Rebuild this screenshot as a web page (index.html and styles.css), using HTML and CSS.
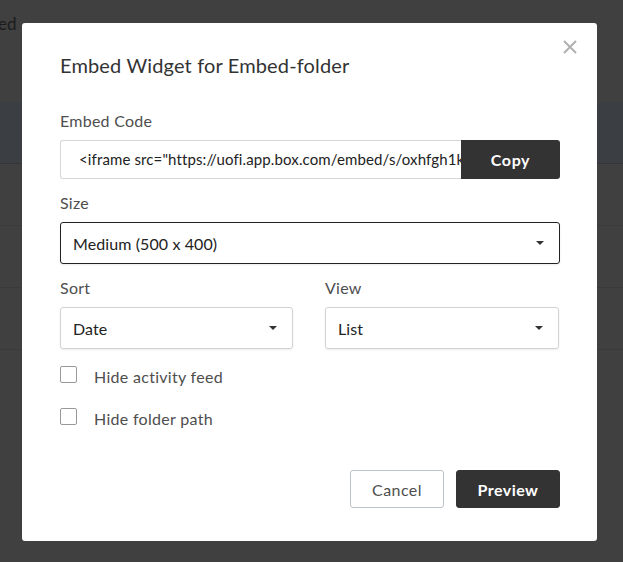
FILE: index.html
```html
<!DOCTYPE html>
<html>
<head>
<meta charset="utf-8">
<link rel="stylesheet" href="styles.css">
</head>
<body>
<div class="page">
  <div class="page-head"><span class="page-title">Embed</span></div>
  <div class="page-band"></div>
  <div class="page-row"></div>
  <div class="page-row"></div>
  <div class="page-row"></div>
</div>

<div class="modal">
  <button class="close" aria-label="Close">
    <svg width="14" height="14" viewBox="0 0 14 14"><path d="M1 1L13 13M13 1L1 13" stroke="#b0b0b0" stroke-width="2" fill="none"/></svg>
  </button>
  <h1 class="title">Embed Widget for Embed-folder</h1>

  <div class="field">
    <div class="label">Embed Code</div>
    <div class="code-row">
      <div class="code-input">&lt;iframe src="https://uofi.app.box.com/embed/s/oxhfgh1k2l3m4n5o6p7q"</div>
      <button class="btn-copy">Copy</button>
    </div>
  </div>

  <div class="field">
    <div class="label">Size</div>
    <div class="select focused"><span>Medium (500 x 400)</span><i class="caret"></i></div>
  </div>

  <div class="two-col">
    <div class="field">
      <div class="label">Sort</div>
      <div class="select"><span>Date</span><i class="caret"></i></div>
    </div>
    <div class="field">
      <div class="label">View</div>
      <div class="select"><span>List</span><i class="caret"></i></div>
    </div>
  </div>

  <label class="check"><span class="box"></span><span class="check-text">Hide activity feed</span></label>
  <label class="check"><span class="box"></span><span class="check-text">Hide folder path</span></label>

  <div class="footer">
    <button class="btn-cancel">Cancel</button>
    <button class="btn-primary">Preview</button>
  </div>
</div>
</body>
</html>
```

FILE: styles.css
```css
* { box-sizing: border-box; }
html, body { margin: 0; padding: 0; }
body {
  width: 623px;
  height: 562px;
  overflow: hidden;
  background: #404040;
  font-family: Lato, "Open Sans", sans-serif;
  position: relative;
}
.page { display: flex; flex-direction: column; }
.page-head { height: 102px; padding-top: 13px; overflow: hidden; }
.page-title {
  display: block;
  margin-left: -35px;
  font-size: 17px;
  line-height: 22px;
  color: #1c1c1c;
}
.page-band { height: 62px; background: #3b3f43; border-bottom: 1px solid #353535; }
.page-row { height: 62px; border-bottom: 1px solid #3a3a3a; }

.modal {
  position: absolute;
  left: 22px;
  top: 23px;
  width: 575px;
  height: 518px;
  background: #fff;
  border-radius: 3px;
  padding: 29px 37px 0 38px;
  color: #4e4e4e;
}
.close {
  position: absolute;
  right: 20px;
  top: 17px;
  border: 0;
  background: none;
  padding: 0;
  width: 14px;
  height: 14px;
  line-height: 0;
}
.title {
  margin: 0 0 34px;
  font-size: 20px;
  font-weight: 400;
  letter-spacing: 0.15px;
  color: #333;
  line-height: 26px;
}
.field { display: flex; flex-direction: column; margin-bottom: 15px; }
.label { font-size: 16px; letter-spacing: 0.25px; line-height: 18px; margin-bottom: 10px; color: #4e4e4e; }
.code-row { display: flex; height: 39px; }
.code-input {
  flex: 1;
  min-width: 0;
  border: 1px solid #d6d6d6;
  border-right: 0;
  border-radius: 3px 0 0 3px;
  padding: 0 0 0 18px;
  font-size: 15px;
  letter-spacing: 0.12px;
  line-height: 37px;
  color: #222;
  white-space: nowrap;
  overflow: hidden;
}
.btn-copy {
  width: 99px;
  border: 0;
  border-radius: 0 3px 3px 0;
  background: #333;
  color: #fff;
  font-family: inherit;
  font-size: 16px;
  letter-spacing: 0.6px;
  font-weight: 700;
  padding: 0;
}
.select {
  height: 42px;
  border: 1px solid #d3d3d3;
  border-radius: 3px;
  box-shadow: 0 1px 2px rgba(0,0,0,0.08);
  display: flex;
  align-items: center;
  justify-content: space-between;
  padding: 0 15px 0 12px;
  font-size: 16px;
  letter-spacing: 0.1px;
  color: #222;
}
.select.focused { border-color: #222; }
.caret {
  width: 0; height: 0;
  border-left: 4px solid transparent;
  border-right: 4px solid transparent;
  border-top: 4px solid #333;
}
.two-col { display: grid; grid-template-columns: 233px 234px; column-gap: 32px; margin-bottom: 17px; }
.two-col .field { margin-bottom: 0; }
.check { display: flex; align-items: flex-start; gap: 17px; height: 20px; }
.check + .check { margin-top: 22px; }
.check-text { font-size: 16px; letter-spacing: 0.3px; line-height: 20px; margin-top: 1px; color: #4e4e4e; }
.box { width: 17px; height: 17px; border: 1px solid #999; border-radius: 2px; background: #fff; }
.footer { display: flex; justify-content: flex-end; gap: 12px; margin-top: 42px; }
.footer button { height: 38px; font-family: inherit; font-size: 16px; letter-spacing: 0.45px; border-radius: 3px; padding: 0; }
.btn-cancel { width: 94px; background: #fff; border: 1px solid #bcc3ca; color: #4e4e4e; }
.btn-primary { width: 104px; background: #333; border: 1px solid #333; color: #fff; font-weight: 700; }
```
